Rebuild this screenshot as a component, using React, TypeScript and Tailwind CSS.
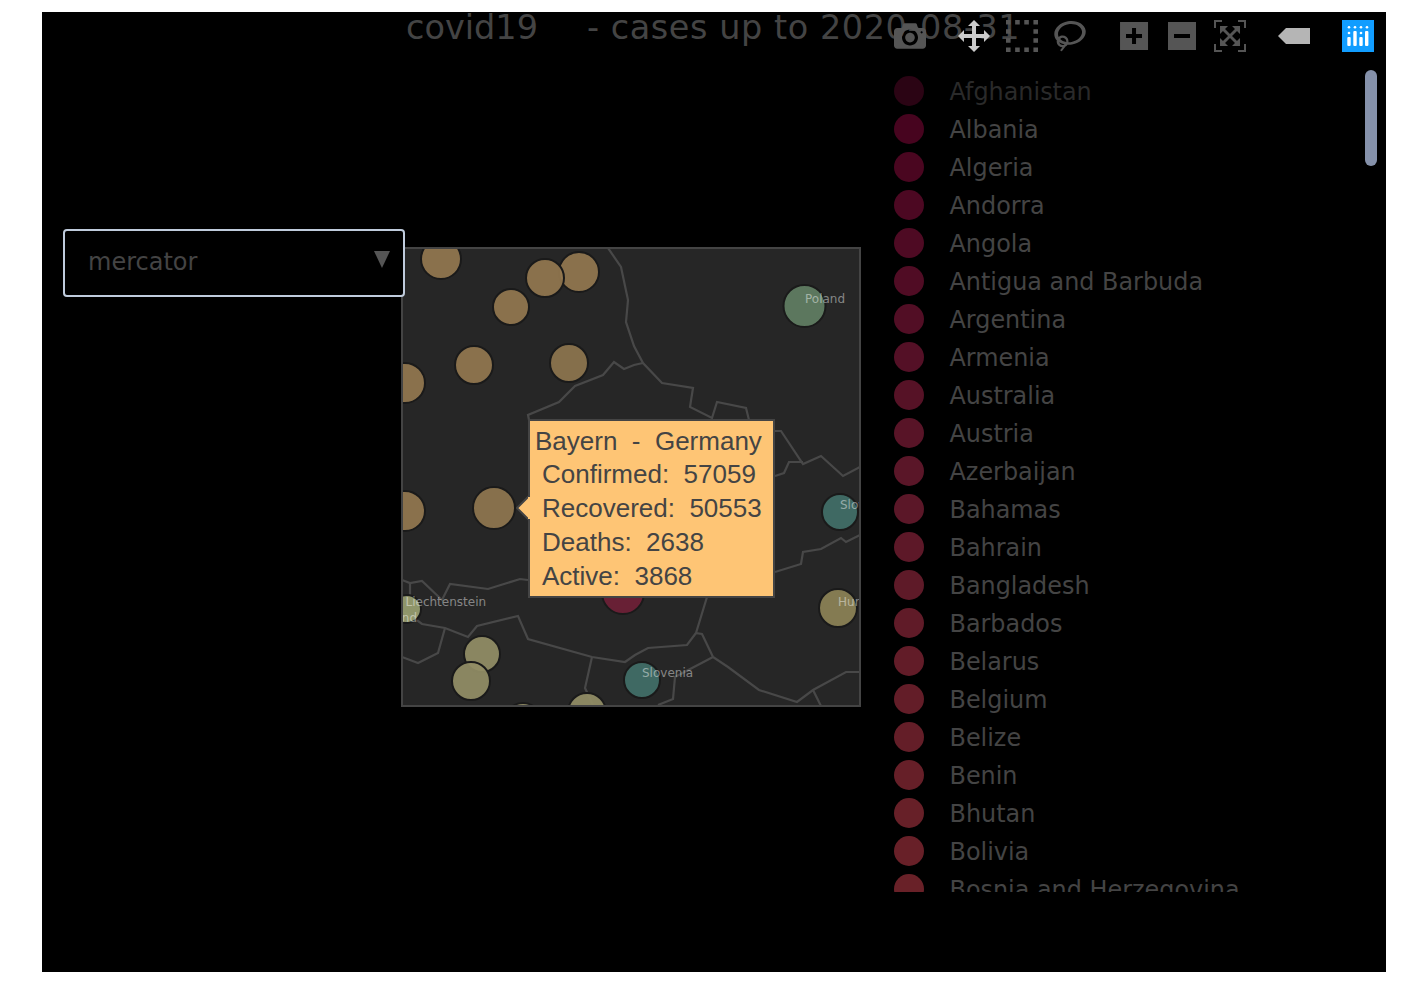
import React from 'react'

const countries = [
  { name: 'Afghanistan', color: '#2b0414', text: '#2a2a2a' },
  { name: 'Albania', color: '#47041f', text: '#444444' },
  { name: 'Algeria', color: '#4a0620', text: '#444444' },
  { name: 'Andorra', color: '#4c0822', text: '#444444' },
  { name: 'Angola', color: '#4e0a23', text: '#444444' },
  { name: 'Antigua and Barbuda', color: '#500c24', text: '#444444' },
  { name: 'Argentina', color: '#520e25', text: '#444444' },
  { name: 'Armenia', color: '#541026', text: '#444444' },
  { name: 'Australia', color: '#561226', text: '#444444' },
  { name: 'Austria', color: '#581427', text: '#444444' },
  { name: 'Azerbaijan', color: '#5a1628', text: '#444444' },
  { name: 'Bahamas', color: '#5b1728', text: '#444444' },
  { name: 'Bahrain', color: '#5d1828', text: '#444444' },
  { name: 'Bangladesh', color: '#5e1a28', text: '#444444' },
  { name: 'Barbados', color: '#601b28', text: '#444444' },
  { name: 'Belarus', color: '#621c28', text: '#444444' },
  { name: 'Belgium', color: '#631d28', text: '#444444' },
  { name: 'Belize', color: '#641e28', text: '#444444' },
  { name: 'Benin', color: '#661f28', text: '#444444' },
  { name: 'Bhutan', color: '#672028', text: '#444444' },
  { name: 'Bolivia', color: '#682028', text: '#444444' },
  { name: 'Bosnia and Herzegovina', color: '#692128', text: '#444444' },
]

// map is drawn in page coordinates, viewBox starts at its top left corner
const borders = [
  '608,248 621,267 628,300 626,322 634,346 643,363 662,383 693,388 690,407 712,418 717,402 746,408 749,420',
  '643,363 634,365 624,369 614,362 603,375 575,386 559,402 528,415 529,420',
  '775,431 781,431 803,464 821,456 843,476 860,467',
  '803,462 789,462 784,473 775,476',
  '775,572 801,564 803,552 821,549 841,538 846,542 860,535',
  '707,597 696,633 702,634 713,657 728,667 759,690 797,702 813,690 846,672 860,672',
  '813,690 821,706',
  '696,633 687,645 648,648 635,655 625,662 592,657 528,639 518,616 477,626 468,637 445,628 422,624 410,615 402,612',
  '713,657 675,677 673,699 658,705',
  '592,657 585,688 593,705',
  '445,628 438,653 418,663 402,657',
  '402,580 410,583 422,581 442,600 450,584 488,589 520,579 528,580',
  '410,583 410,595',
]

const bubbles = [
  { x: 441, y: 259, r: 20, fill: '#92774f' },
  { x: 579, y: 272, r: 20, fill: '#92774f' },
  { x: 545, y: 278, r: 19, fill: '#92774f' },
  { x: 511, y: 307, r: 18, fill: '#92774f' },
  { x: 474, y: 365, r: 19, fill: '#92774f' },
  { x: 569, y: 363, r: 19, fill: '#8d754e' },
  { x: 405, y: 383, r: 20, fill: '#92774f' },
  { x: 405, y: 511, r: 20, fill: '#92774f' },
  { x: 494, y: 508, r: 21, fill: '#8f764f' },
  { x: 407, y: 609, r: 14, fill: '#989e70' },
  { x: 482, y: 654, r: 18, fill: '#928e66' },
  { x: 471, y: 681, r: 19, fill: '#928e66' },
  { x: 642, y: 680, r: 18, fill: '#416f68' },
  { x: 804.5, y: 306, r: 21, fill: '#617e63' },
  { x: 840, y: 512, r: 18, fill: '#416f68' },
  { x: 838, y: 608, r: 19, fill: '#8c8256' },
  { x: 623, y: 593, r: 21, fill: '#6e2036' },
  { x: 587, y: 712, r: 19, fill: '#928e66' },
  { x: 523, y: 722, r: 19, fill: '#928e66' },
]

const labelClass = 'fill-white/45 text-[12px]'

const MapChart = () => (
  <div className="w-[460px] h-[460px] mt-[235px] -ml-[1px] border-2 border-[#444] bg-[#262626] overflow-hidden">
    <svg width="458" height="458" viewBox="403 249 458 458" className="block">
      {borders.map((points, i) => (
        <polyline key={i} points={points} fill="none" stroke="#484848" strokeWidth="2.2" />
      ))}
      {bubbles.map((b, i) => (
        <circle key={i} cx={b.x} cy={b.y} r={b.r} fill={b.fill} fillOpacity="0.92" stroke="#1a1a1a" strokeWidth="2" />
      ))}
      <text x="805" y="303" className={labelClass}>Poland</text>
      <text x="840" y="509" className={labelClass}>Slovakia</text>
      <text x="838" y="606" className={labelClass}>Hungary</text>
      <text x="405.5" y="606" className={labelClass}>Liechtenstein</text>
      <text x="417" y="622" textAnchor="end" className={labelClass}>Switzerland</text>
      <text x="642" y="677" className={labelClass}>Slovenia</text>
    </svg>
  </div>
)

const ModeIcon = ({ d, vb = '0 0 1000 1000', fill = '#555555', w = 32 }: { d: string; vb?: string; fill?: string; w?: number }) => (
  <svg width={w} height="32" viewBox={vb} className="block shrink-0">
    <path d={d} fill={fill} transform="matrix(1 0 0 -1 0 850)" />
  </svg>
)

const Toolbar = () => (
  <div className="absolute top-[8px] left-[852px] flex items-center gap-[32px]">
    <ModeIcon d="m500 450c-83 0-150-67-150-150 0-83 67-150 150-150 83 0 150 67 150 150 0 83-67 150-150 150z m400 150h-120c-16 0-34 13-39 29l-31 93c-6 15-23 28-40 28h-340c-16 0-34-13-39-28l-31-94c-6-15-23-28-40-28h-120c-55 0-100-45-100-100v-450c0-55 45-100 100-100h800c55 0 100 45 100 100v450c0 55-45 100-100 100z m-400-550c-138 0-250 112-250 250 0 138 112 250 250 250 138 0 250-112 250-250 0-138-112-250-250-250z m365 380c-19 0-35 16-35 35 0 19 16 35 35 35 19 0 35-16 35-35 0-19-16-35-35-35z" />
    <div className="flex gap-[16px]">
      <ModeIcon fill="#cccccc" d="m1000 350l-187 188 0-125-250 0 0 250 125 0-188 187-187-187 125 0 0-250-250 0 0 125-188-188 186-187 0 125 252 0 0-250-125 0 187-188 188 188-125 0 0 250 250 0 0-126 187 188z" />
      <ModeIcon d="m0 850l0-143 143 0 0 143-143 0z m286 0l0-143 143 0 0 143-143 0z m285 0l0-143 143 0 0 143-143 0z m286 0l0-143 143 0 0 143-143 0z m-857-286l0-143 143 0 0 143-143 0z m857 0l0-143 143 0 0 143-143 0z m-857-285l0-143 143 0 0 143-143 0z m857 0l0-143 143 0 0 143-143 0z m-857-286l0-143 143 0 0 143-143 0z m286 0l0-143 143 0 0 143-143 0z m285 0l0-143 143 0 0 143-143 0z m286 0l0-143 143 0 0 143-143 0z" />
      <ModeIcon vb="0 0 1031 1000" d="m1018 538c-36 207-290 336-568 286-277-48-473-256-436-463 10-57 36-108 76-151-13-66 11-137 68-183 34-28 75-41 114-42l-55-70 0 0c-2-1-3-2-4-3-10-14-8-34 5-45 14-11 34-8 45 4 1 1 2 3 2 5l0 0 113 140c16 11 31 24 45 40 4 3 6 7 8 11 48-3 100 0 151 9 278 48 473 255 436 462z m-624-379c-80 14-149 48-197 96 42 42 109 47 156 9 33-26 47-66 41-105z m-187-74c-19 16-33 37-39 60 50-32 109-55 174-68-42-25-95-24-135 8z m360 75c-34-7-69-9-102-8 8 62-16 128-68 170-73 59-175 54-244-5-9 20-16 40-20 61-28 159 121 317 333 354s407-60 434-217c28-159-121-318-333-355z" />
    </div>
    <div className="flex gap-[16px]">
      <ModeIcon vb="0 0 875 1000" d="m1 787l0-875 875 0 0 875-875 0z m687-500l-187 0 0-187-125 0 0 187-188 0 0 125 188 0 0 187 125 0 0-187 187 0 0-125z" />
      <ModeIcon vb="0 0 875 1000" d="m0 788l0-876 875 0 0 876-875 0z m688-500l-500 0 0 125 500 0 0-125z" />
      <ModeIcon d="m250 850l-187 0-63 0 0-62 0-188 63 0 0 188 187 0 0 62z m688 0l-188 0 0-62 188 0 0-188 62 0 0 188 0 62-62 0z m-875-938l0 188-63 0 0-188 0-62 63 0 187 0 0 62-187 0z m875 188l0-188-188 0 0-62 188 0 62 0 0 62 0 188-62 0z m-125 188l-1 0-93-94-156 156 156 156 92-93 2 0 0 250-250 0 0-2 93-92-156-156-156 156 94 92 0 2-250 0 0-250 0 0 93 93 157-156-157-156-93 94 0 0 0-250 250 0 0 0-94 93 156 157 156-157-93-93 0 0 250 0 0 250z" />
    </div>
    <ModeIcon fill="#b5b5b5" vb="0 0 1500 1000" d="m375 725l0 0-375-375 375-374 0-1 1125 0 0 750-1125 0z" />
    <svg width="32" height="32" viewBox="0 0 32 32" className="block shrink-0">
      <rect width="32" height="32" fill="#119dff" />
      <g fill="#ffffff">
        <rect x="5.3" y="17" width="3.4" height="9" rx="1" />
        <rect x="11.3" y="11" width="3.4" height="15" rx="1" />
        <rect x="17.3" y="17" width="3.4" height="9" rx="1" />
        <rect x="23" y="11" width="3.4" height="15" rx="1" />
        <circle cx="7" cy="7.3" r="1.3" />
        <circle cx="13" cy="7.3" r="1.3" />
        <circle cx="19" cy="7.3" r="1.3" />
        <circle cx="25" cy="7.3" r="1.3" />
        <circle cx="7" cy="13" r="1.3" />
        <circle cx="19" cy="13" r="1.3" />
      </g>
    </svg>
  </div>
)

const Tooltip = () => (
  <div className="absolute left-[486px] top-[407px] w-[247px] h-[179px] bg-[#fec575] border-2 border-[#444] pl-[12px] pt-[2px] font-['Liberation_Sans',sans-serif] text-[26px] leading-[34px] text-[#444] whitespace-pre">
    <svg width="14" height="26" viewBox="0 0 14 26" className="absolute -left-[14px] top-[74px]">
      <polygon points="13,1 1,13 13,25" fill="#fec575" stroke="#444444" strokeWidth="2" />
      <rect x="12" y="2" width="2" height="22" fill="#fec575" />
    </svg>
    <div className="relative top-[1px] -ml-[7px]">Bayern  -  Germany</div>
    <div>Confirmed:  57059</div>
    <div>Recovered:  50553</div>
    <div>Deaths:  2638</div>
    <div>Active:  3868</div>
  </div>
)

export default function App() {
  return (
    <div className="min-h-screen bg-white pt-[12px] pl-[42px] font-['DejaVu_Sans',sans-serif]">
      <div className="relative flex w-[1344px] h-[960px] bg-black overflow-hidden">
        <div className="absolute left-[364px] -top-[4px] flex gap-[49px] text-[33.5px] leading-[40px] text-[#444] whitespace-pre">
          <span>covid19</span>
          <span className="tracking-[0.55px]">- cases up to 2020-08-31</span>
        </div>

        <div className="relative z-10 w-[360px] shrink-0 pl-[21px] pt-[217px]">
          <div className="flex items-center justify-between w-[342px] h-[68px] rounded-[4px] border-2 border-[#bfcbdc] bg-black pl-[23px] pr-[13px]">
            <span className="text-[24px] -mt-[3px] text-[#444]">mercator</span>
            <svg width="16" height="17" viewBox="0 0 16 17" className="-mt-[8px]">
              <polygon points="0,0 16,0 8,17" fill="#555555" />
            </svg>
          </div>
        </div>

        <MapChart />

        <div className="ml-[33px] mt-[60px] h-[820px] overflow-hidden">
          {countries.map((c) => (
            <div key={c.name} className="flex items-center gap-[25.5px] h-[38px]">
              <span className="w-[30px] h-[30px] rounded-full shrink-0" style={{ backgroundColor: c.color }} />
              <span className="relative top-[2px] text-[23.9px] whitespace-nowrap" style={{ color: c.text }}>{c.name}</span>
            </div>
          ))}
        </div>

        <div className="absolute left-[1323px] top-[58px] w-[12px] h-[96px] rounded-[6px] bg-[#8591aa]" />
        <Toolbar />
        <Tooltip />
      </div>
    </div>
  )
}
